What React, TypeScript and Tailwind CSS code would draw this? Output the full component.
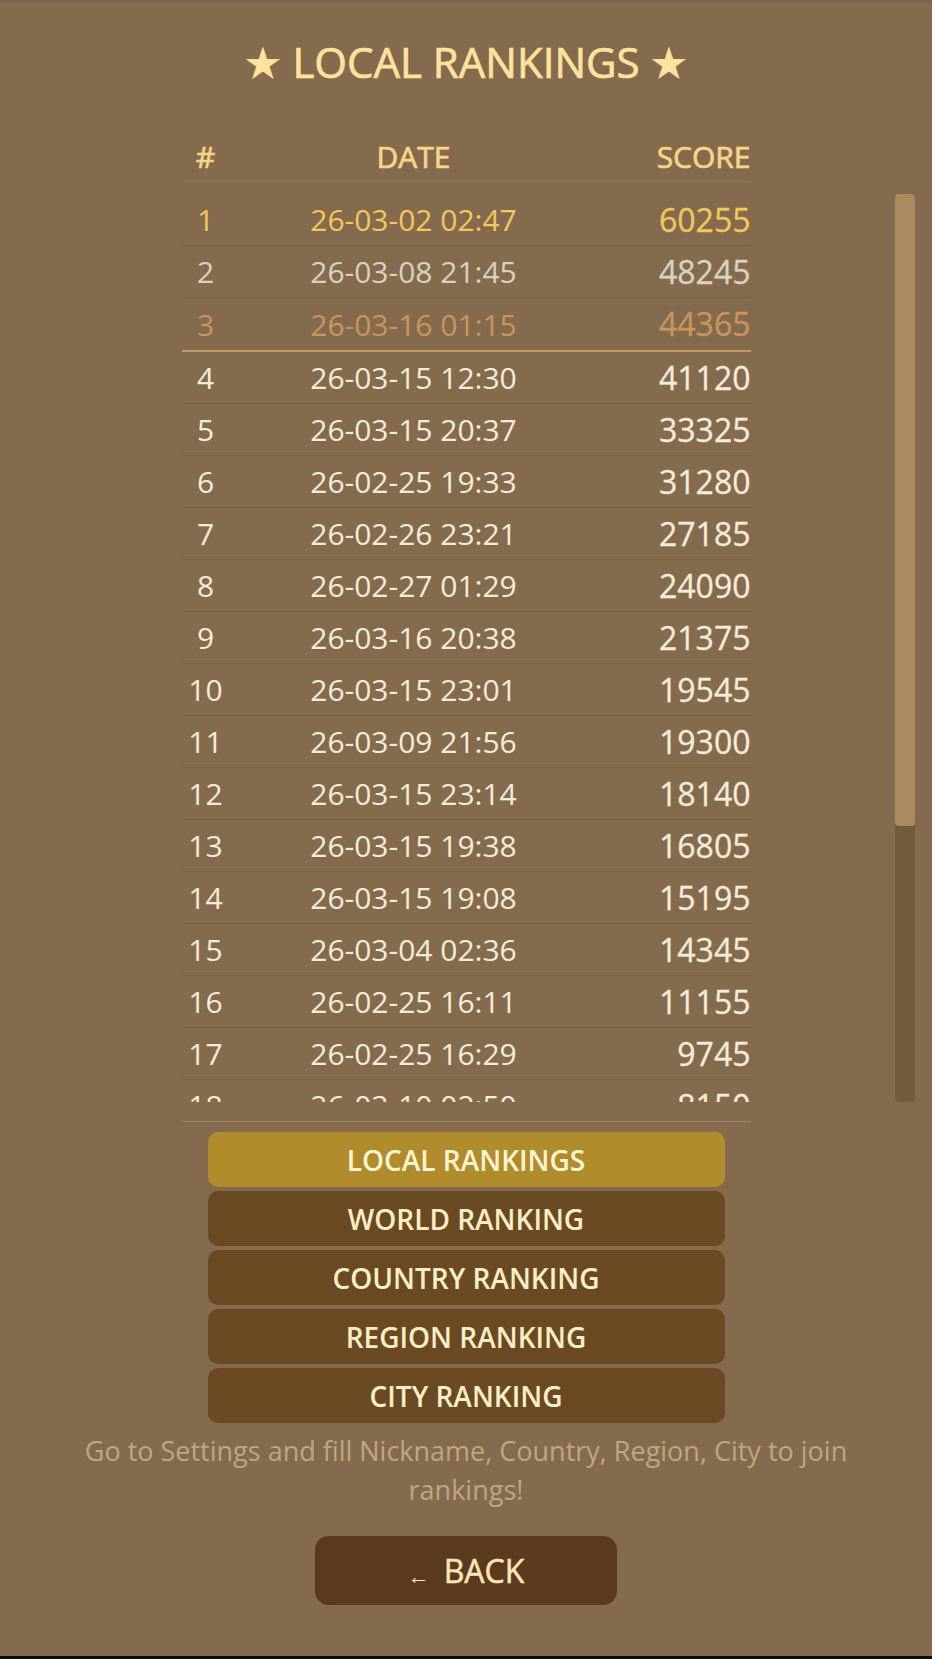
import React from "react";

type Row = { date: string; score: number };

const rows: Row[] = [
  { date: "26-03-02 02:47", score: 60255 },
  { date: "26-03-08 21:45", score: 48245 },
  { date: "26-03-16 01:15", score: 44365 },
  { date: "26-03-15 12:30", score: 41120 },
  { date: "26-03-15 20:37", score: 33325 },
  { date: "26-02-25 19:33", score: 31280 },
  { date: "26-02-26 23:21", score: 27185 },
  { date: "26-02-27 01:29", score: 24090 },
  { date: "26-03-16 20:38", score: 21375 },
  { date: "26-03-15 23:01", score: 19545 },
  { date: "26-03-09 21:56", score: 19300 },
  { date: "26-03-15 23:14", score: 18140 },
  { date: "26-03-15 19:38", score: 16805 },
  { date: "26-03-15 19:08", score: 15195 },
  { date: "26-03-04 02:36", score: 14345 },
  { date: "26-02-25 16:11", score: 11155 },
  { date: "26-02-25 16:29", score: 9745 },
  { date: "26-03-10 02:50", score: 8150 },
  { date: "26-03-01 22:14", score: 7620 },
  { date: "26-02-28 18:40", score: 6985 },
  { date: "26-03-05 00:12", score: 5410 },
  { date: "26-02-24 21:03", score: 4870 },
  { date: "26-03-11 23:47", score: 3325 },
  { date: "26-02-23 20:19", score: 2160 },
  { date: "26-02-22 17:55", score: 1045 },
];

const tabs = ["LOCAL RANKINGS", "WORLD RANKING", "COUNTRY RANKING", "REGION RANKING", "CITY RANKING"];

function rowColor(rank: number) {
  if (rank === 1) return "text-[#f2c75c]";
  if (rank === 2) return "text-[#d9d1c4]";
  if (rank === 3) return "text-[#c9955a]";
  return "text-[#f6ecdb]";
}

function ScoreRow({ rank, row }: { rank: number; row: Row }) {
  // podium ends with a gold rule
  const border =
    rank === 3 ? "h-[54px] border-b-2 border-[#bf9c5f]" : "h-[52px] border-b border-[#7b6348]";
  return (
    <div className={`flex items-center ${border} ${rowColor(rank)}`}>
      <span className="w-[48px] text-center text-[30px]">{rank}</span>
      <span className="w-[368px] text-center text-[30px]">{row.date}</span>
      <span className="flex-1 text-right text-[32px] [-webkit-text-stroke:0.3px_currentColor]">{row.score}</span>
    </div>
  );
}

export default function App() {
  return (
    <div className="h-[1659px] bg-[#856b4e] border-t-2 border-[#726650] border-b-[3px] border-b-[#140d07] flex flex-col items-center pt-[31px] font-['Open_Sans',sans-serif]">
      <h1 className="text-[42px] leading-[57px] text-[#fde39e] [-webkit-text-stroke:0.7px_currentColor]">
        ★ LOCAL RANKINGS ★
      </h1>

      {/* header */}
      <div className="mt-[42px] w-[569px] h-[50px] flex items-center border-b border-[#8f7658] text-[30px] text-[#f7d585] [-webkit-text-stroke:0.7px_currentColor]">
        <span className="w-[48px] text-center">#</span>
        <span className="w-[368px] text-center">DATE</span>
        <span className="flex-1 text-right">SCORE</span>
      </div>

      {/* list + scrollbar */}
      <div className="mt-[12px] w-[898px] h-[908px] flex">
        <div className="flex-1 overflow-hidden pl-[20px]">
          <div className="w-[569px] mx-auto">
            {rows.map((r, i) => (
              <ScoreRow key={i} rank={i + 1} row={r} />
            ))}
          </div>
        </div>
        <div className="w-[20px] h-full bg-[#735b3f] rounded-[4px]">
          <div className="h-[632px] bg-[#a88b5e] rounded-[4px]" />
        </div>
      </div>

      <div className="mt-[19px] w-[569px] border-t border-[#9c8468] pt-[10px] flex justify-center">
        <div className="w-[517px] flex flex-col gap-[4px]">
          {tabs.map((t, i) => (
            <button
              key={t}
              className={`h-[55px] rounded-[10px] text-[28px] font-semibold ${
                i === 0 ? "bg-[#b18c2c] text-[#fff3d2]" : "bg-[#6a4a22] text-[#fdeec8]"
              }`}
            >
              {t}
            </button>
          ))}
        </div>
      </div>

      <p className="mt-[8px] w-[820px] text-center text-[27px] leading-[39px] text-[#bda682]">
        Go to Settings and fill Nickname, Country, Region, City to join rankings!
      </p>

      <button className="mt-[27px] w-[302px] h-[69px] rounded-[14px] bg-[#5b3b1e] text-[#fde6b8] flex items-center justify-center">
        <span className="text-[22px] mt-[10px] mr-[14px]">←</span>
        <span className="text-[32px] [-webkit-text-stroke:0.5px_currentColor]">BACK</span>
      </button>
    </div>
  );
}
